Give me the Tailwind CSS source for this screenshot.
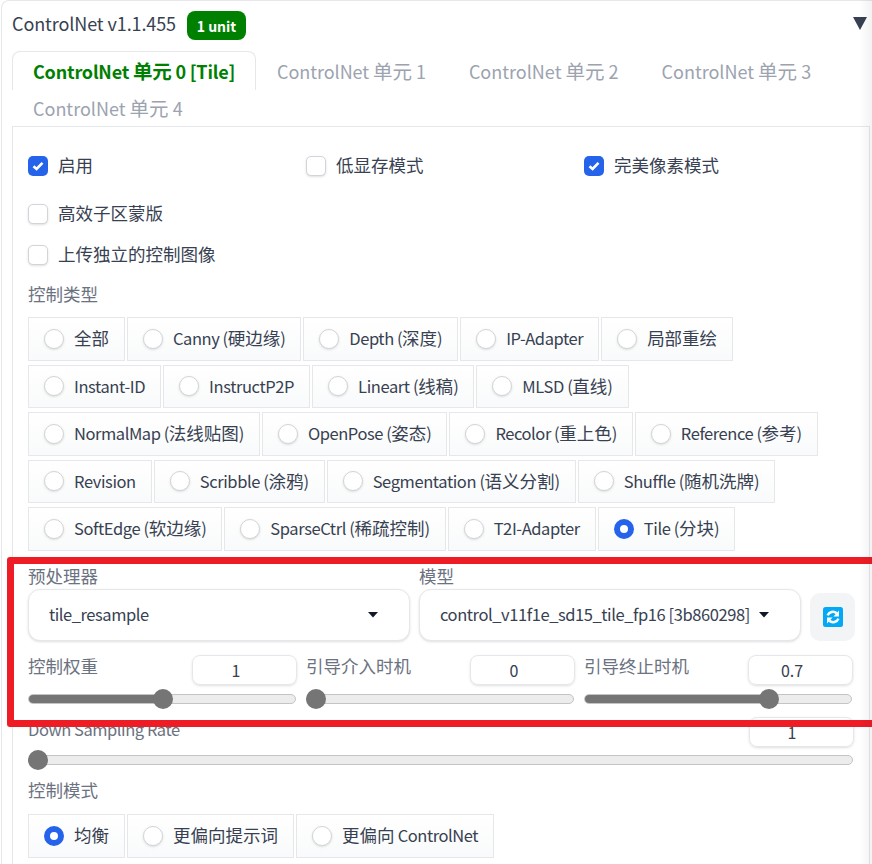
<!DOCTYPE html>
<html lang="zh">
<head>
<meta charset="utf-8">
<script src="https://cdn.jsdelivr.net/npm/@tailwindcss/browser@4"></script>
</head>
<body class="bg-white">
<div class="relative w-[872px] h-[864px] overflow-hidden bg-white font-['Noto_Sans_CJK_SC','Noto_Sans',sans-serif] text-[#374151] text-[17.5px] leading-6">
  <div class="ml-[1px] w-[880px] h-[880px] border-l border-t border-[#e5e7eb] rounded-tl-lg pl-[10px] pt-[10px]">
    <div class="flex items-start h-[30px] w-[860px]">
      <span class="text-[18px] tracking-[-0.1px]">ControlNet v1.1.455</span>
      <span class="ml-[11px] h-[29px] w-[59px] rounded-lg bg-[#008000] text-white text-[14px] font-bold flex items-center justify-center">1 unit</span>
      <svg class="ml-auto mr-[5px] mt-[5px]" width="14" height="14" viewBox="0 0 14 14"><polygon points="0,1 14,1 7,14" fill="#374151"/></svg>
    </div>
    <div class="flex flex-wrap w-[857px] mt-[10px] text-[18px] text-[#9ca3af]">
      <div class="h-[39px] px-[20px] flex items-center border border-b-0 border-[#e5e7eb] rounded-t-lg text-[#008000] font-bold bg-white whitespace-pre tracking-[-0.2px]">ControlNet <span class="text-[19.5px]">单元</span> 0 [Tile]</div>
      <div class="h-[39px] px-[21px] flex items-center whitespace-pre tracking-[-0.05px]">ControlNet <span class="text-[19.5px]">单元</span> 1</div>
      <div class="h-[39px] px-[21px] ml-[1px] flex items-center whitespace-pre tracking-[0px]">ControlNet <span class="text-[19.5px]">单元</span> 2</div>
      <div class="h-[39px] px-[21px] ml-[1px] flex items-center whitespace-pre tracking-[0px]">ControlNet <span class="text-[19.5px]">单元</span> 3</div>
      <div class="h-[36px] px-[21px] flex items-center whitespace-pre tracking-[0px]">ControlNet <span class="text-[19.5px]">单元</span> 4</div>
    </div>
    <div class="w-[858px] h-[760px] border-l border-t border-r border-[#e5e7eb] px-[15px] pt-[29px]">
      <div class="grid grid-cols-3 w-[834px] [&>label]:pb-[2px] [&>label>span]:translate-y-[1px]">
        <label class="flex items-center gap-[10px] h-[20px]"><span class="w-[20px] h-[20px] rounded-[5px] bg-[#2563eb] flex items-center justify-center"><svg width="12" height="10" viewBox="0 0 12 10"><path d="M1.5 5.2 4.6 8 10.5 1.8" fill="none" stroke="#fff" stroke-width="2.6"/></svg></span>启用</label>
        <label class="flex items-center gap-[10px] h-[20px]"><span class="w-[20px] h-[20px] rounded-[5px] border border-[#d1d5db] bg-white shadow-sm"></span>低显存模式</label>
        <label class="flex items-center gap-[10px] h-[20px]"><span class="w-[20px] h-[20px] rounded-[5px] bg-[#2563eb] flex items-center justify-center"><svg width="12" height="10" viewBox="0 0 12 10"><path d="M1.5 5.2 4.6 8 10.5 1.8" fill="none" stroke="#fff" stroke-width="2.6"/></svg></span>完美像素模式</label>
      </div>
      <label class="flex items-center gap-[10px] h-[20px] mt-[28px] pb-[2px]"><span class="translate-y-[1px] w-[20px] h-[20px] rounded-[5px] border border-[#d1d5db] bg-white shadow-sm"></span>高效子区蒙版</label>
      <label class="flex items-center gap-[10px] h-[20px] mt-[21px] pb-[2px]"><span class="translate-y-[1px] w-[20px] h-[20px] rounded-[5px] border border-[#d1d5db] bg-white shadow-sm"></span>上传独立的控制图像</label>

      <div class="mt-[17px] h-[25px] text-[#6b7280]">控制类型</div>
      <div class="flex flex-col gap-[4px] mt-[10px] [&>div]:flex [&>div]:gap-x-[2px] [&>div>div]:h-[43.5px] [&>div>div]:px-[15px] [&>div>div]:pb-[2px] [&>div>div]:flex [&>div>div]:items-center [&>div>div]:gap-[10px] [&>div>div]:border [&>div>div]:border-[#e5e7eb] [&>div>div]:bg-gradient-to-b [&>div>div]:from-white [&>div>div]:to-[#f9fafb] [&>div>div]:whitespace-pre [&>div>div>span:first-child]:translate-y-[1px] [&>div:nth-child(even)>div]:pb-0 [&>div:nth-child(even)>div>span:first-child]:translate-y-0">
        <div>
          <div><span class="w-[20px] h-[20px] rounded-full border border-[#d1d5db] bg-white shadow-sm"></span>全部</div>
          <div><span class="w-[20px] h-[20px] rounded-full border border-[#d1d5db] bg-white shadow-sm"></span><span><span class="text-[16.5px] tracking-[-0.45px]">Canny (</span>硬边缘<span class="text-[16.5px] tracking-[-0.45px]">)</span></span></div>
          <div><span class="w-[20px] h-[20px] rounded-full border border-[#d1d5db] bg-white shadow-sm"></span><span><span class="text-[16.5px] tracking-[-0.45px]">Depth (</span>深度<span class="text-[16.5px] tracking-[-0.45px]">)</span></span></div>
          <div><span class="w-[20px] h-[20px] rounded-full border border-[#d1d5db] bg-white shadow-sm"></span><span class="text-[16.5px] tracking-[-0.45px]">IP-Adapter</span></div>
          <div><span class="w-[20px] h-[20px] rounded-full border border-[#d1d5db] bg-white shadow-sm"></span>局部重绘</div>
        </div>
        <div>
          <div><span class="w-[20px] h-[20px] rounded-full border border-[#d1d5db] bg-white shadow-sm"></span><span class="text-[16.5px] tracking-[-0.4px]">Instant-ID</span></div>
          <div><span class="w-[20px] h-[20px] rounded-full border border-[#d1d5db] bg-white shadow-sm"></span><span class="text-[16.5px] tracking-[-0.4px]">InstructP2P</span></div>
          <div><span class="w-[20px] h-[20px] rounded-full border border-[#d1d5db] bg-white shadow-sm"></span><span><span class="text-[16.5px] tracking-[-0.4px]">Lineart (</span>线稿<span class="text-[16.5px] tracking-[-0.4px]">)</span></span></div>
          <div><span class="w-[20px] h-[20px] rounded-full border border-[#d1d5db] bg-white shadow-sm"></span><span><span class="text-[16.5px] tracking-[-0.4px]">MLSD (</span>直线<span class="text-[16.5px] tracking-[-0.4px]">)</span></span></div>
        </div>
        <div>
          <div><span class="w-[20px] h-[20px] rounded-full border border-[#d1d5db] bg-white shadow-sm"></span><span><span class="text-[16.5px] tracking-[-0.45px]">NormalMap (</span>法线贴图<span class="text-[16.5px] tracking-[-0.45px]">)</span></span></div>
          <div><span class="w-[20px] h-[20px] rounded-full border border-[#d1d5db] bg-white shadow-sm"></span><span><span class="text-[16.5px] tracking-[-0.45px]">OpenPose (</span>姿态<span class="text-[16.5px] tracking-[-0.45px]">)</span></span></div>
          <div><span class="w-[20px] h-[20px] rounded-full border border-[#d1d5db] bg-white shadow-sm"></span><span><span class="text-[16.5px] tracking-[-0.45px]">Recolor (</span>重上色<span class="text-[16.5px] tracking-[-0.45px]">)</span></span></div>
          <div><span class="w-[20px] h-[20px] rounded-full border border-[#d1d5db] bg-white shadow-sm"></span><span><span class="text-[16.5px] tracking-[-0.45px]">Reference (</span>参考<span class="text-[16.5px] tracking-[-0.45px]">)</span></span></div>
        </div>
        <div>
          <div><span class="w-[20px] h-[20px] rounded-full border border-[#d1d5db] bg-white shadow-sm"></span><span class="text-[16.5px] tracking-[-0.4px]">Revision</span></div>
          <div><span class="w-[20px] h-[20px] rounded-full border border-[#d1d5db] bg-white shadow-sm"></span><span><span class="text-[16.5px] tracking-[-0.4px]">Scribble (</span>涂鸦<span class="text-[16.5px] tracking-[-0.4px]">)</span></span></div>
          <div><span class="w-[20px] h-[20px] rounded-full border border-[#d1d5db] bg-white shadow-sm"></span><span><span class="text-[16.5px] tracking-[-0.4px]">Segmentation (</span>语义分割<span class="text-[16.5px] tracking-[-0.4px]">)</span></span></div>
          <div><span class="w-[20px] h-[20px] rounded-full border border-[#d1d5db] bg-white shadow-sm"></span><span><span class="text-[16.5px] tracking-[-0.4px]">Shuffle (</span>随机洗牌<span class="text-[16.5px] tracking-[-0.4px]">)</span></span></div>
        </div>
        <div>
          <div><span class="w-[20px] h-[20px] rounded-full border border-[#d1d5db] bg-white shadow-sm"></span><span><span class="text-[16.5px] tracking-[-0.4px]">SoftEdge (</span>软边缘<span class="text-[16.5px] tracking-[-0.4px]">)</span></span></div>
          <div><span class="w-[20px] h-[20px] rounded-full border border-[#d1d5db] bg-white shadow-sm"></span><span><span class="text-[16.5px] tracking-[-0.4px]">SparseCtrl (</span>稀疏控制<span class="text-[16.5px] tracking-[-0.4px]">)</span></span></div>
          <div><span class="w-[20px] h-[20px] rounded-full border border-[#d1d5db] bg-white shadow-sm"></span><span class="text-[16.5px] tracking-[-0.4px]">T2I-Adapter</span></div>
          <div><span class="w-[20px] h-[20px] rounded-full border-[6px] border-[#2563eb] bg-white"></span><span><span class="text-[16.5px] tracking-[-0.4px]">Tile (</span>分块<span class="text-[16.5px] tracking-[-0.4px]">)</span></span></div>
        </div>
      </div>

      <div class="flex mt-[14.5px] w-[827px]">
        <div class="w-[382px]">
          <div class="h-[24px] text-[#6b7280] -translate-y-[1px]">预处理器</div>
          <div class="h-[52px] rounded-xl border border-[#e5e7eb] bg-white flex items-center pl-[20px] pr-[31px] justify-between shadow-sm"><span class="text-[16.5px] tracking-[-0.45px] -translate-y-[1px]">tile_resample</span><svg width="10" height="6" viewBox="0 0 10 6"><polygon points="0,0 10,0 5,5.5" fill="#111827"/></svg></div>
        </div>
        <div class="w-[382px] ml-[9px]">
          <div class="h-[24px] text-[#6b7280] -translate-y-[1px]">模型</div>
          <div class="h-[52px] rounded-xl border border-[#e5e7eb] bg-white flex items-center pl-[20px] pr-[31px] justify-between shadow-sm"><span class="whitespace-nowrap text-[16.5px] tracking-[-0.42px] -translate-y-[1px]">control_v11f1e_sd15_tile_fp16 [3b860298]</span><svg class="shrink-0" width="10" height="6" viewBox="0 0 10 6"><polygon points="0,0 10,0 5,5.5" fill="#111827"/></svg></div>
        </div>
        <div class="w-[45px] h-[48px] ml-[9px] mt-[28px] rounded-[10px] bg-[#f3f4f6] flex items-center justify-center shrink-0">
          <svg width="20" height="20" viewBox="0 0 20 20"><rect width="20" height="20" rx="2.5" fill="#03a9f4"/><path d="M4.6 8.4A5.6 5.6 0 0 1 13.6 6.2" fill="none" stroke="#fff" stroke-width="2.5"/><polygon points="16,3.6 16,9.6 10.4,9.6" fill="#fff"/><path d="M15.4 11.6A5.6 5.6 0 0 1 6.4 13.8" fill="none" stroke="#fff" stroke-width="2.5"/><polygon points="4,16.4 4,10.4 9.6,10.4" fill="#fff"/></svg>
        </div>
      </div>

      <div class="grid grid-cols-3 gap-x-[9px] mt-[14px] w-[825px]">
        <div>
          <div class="flex justify-between h-[30px]"><span class="text-[#6b7280] -translate-y-[1px]">控制权重</span><span class="w-[105px] h-[30px] pr-[17px] rounded-lg border border-[#e5e7eb] flex items-center justify-center text-[16px] shadow-sm">1</span></div>
          <div class="relative h-[10px] mt-[9px] mr-[1px] rounded-full bg-[#ececec] border border-[#c4c4c4]"><div class="h-[8px] w-[135px] rounded-l-full bg-[#757575]"></div><div class="absolute w-[20px] h-[20px] rounded-full bg-[#757575] top-[-6px] left-[124px]"></div></div>
        </div>
        <div>
          <div class="flex justify-between h-[30px]"><span class="text-[#6b7280] -translate-y-[1px]">引导介入时机</span><span class="w-[105px] h-[30px] pr-[17px] rounded-lg border border-[#e5e7eb] flex items-center justify-center text-[16px] shadow-sm">0</span></div>
          <div class="relative h-[10px] mt-[9px] mr-[1px] rounded-full bg-[#ececec] border border-[#c4c4c4]"><div class="absolute w-[20px] h-[20px] rounded-full bg-[#757575] top-[-6px] left-[-1px]"></div></div>
        </div>
        <div>
          <div class="flex justify-between h-[30px]"><span class="text-[#6b7280] -translate-y-[1px]">引导终止时机</span><span class="w-[105px] h-[30px] pr-[17px] rounded-lg border border-[#e5e7eb] flex items-center justify-center text-[16px] shadow-sm">0.7</span></div>
          <div class="relative h-[10px] mt-[9px] mr-[1px] rounded-full bg-[#ececec] border border-[#c4c4c4]"><div class="h-[8px] w-[184px] rounded-l-full bg-[#757575]"></div><div class="absolute w-[20px] h-[20px] rounded-full bg-[#757575] top-[-6px] left-[174px]"></div></div>
        </div>
      </div>

      <div class="w-[826px] mt-[13px]">
        <div class="flex justify-between h-[30px]"><span class="text-[#6b7280] text-[16.5px] tracking-[-0.45px]">Down Sampling Rate</span><span class="w-[105px] h-[30px] pr-[19px] rounded-lg border border-[#e5e7eb] flex items-center justify-center text-[16px] shadow-sm">1</span></div>
        <div class="relative h-[10px] mt-[8px] mr-[1px] rounded-full bg-[#ececec] border border-[#c4c4c4]"><div class="absolute w-[20px] h-[20px] rounded-full bg-[#757575] top-[-6px] left-[-1px]"></div></div>
      </div>

      <div class="mt-[14px] h-[24px] text-[#6b7280] -translate-y-[1px]">控制模式</div>
      <div class="flex gap-x-[2px] mt-[11px] [&>div]:h-[43.5px] [&>div]:px-[15px] [&>div]:pb-[2px] [&>div]:flex [&>div]:items-center [&>div]:gap-[10px] [&>div]:border [&>div]:border-[#e5e7eb] [&>div]:bg-gradient-to-b [&>div]:from-white [&>div]:to-[#f9fafb] [&>div]:whitespace-pre [&>div>span:first-child]:translate-y-[1px]">
        <div><span class="w-[20px] h-[20px] rounded-full border-[6px] border-[#2563eb] bg-white"></span>均衡</div>
        <div><span class="w-[20px] h-[20px] rounded-full border border-[#d1d5db] bg-white shadow-sm"></span>更偏向提示词</div>
        <div><span class="w-[20px] h-[20px] rounded-full border border-[#d1d5db] bg-white shadow-sm"></span><span>更偏向<span class="text-[16.5px] tracking-[-0.45px]"> ControlNet</span></span></div>
      </div>
    </div>
  </div>
  <div class="absolute left-[7px] top-[557px] w-[872px] h-[170px] border-[7px] border-[#ee1c25] rounded-[3px] pointer-events-none"></div>
  <div class="absolute right-0 top-0 w-[13px] h-[864px] bg-gradient-to-r from-transparent to-black/5 pointer-events-none"></div>
</div>
</body>
</html>
